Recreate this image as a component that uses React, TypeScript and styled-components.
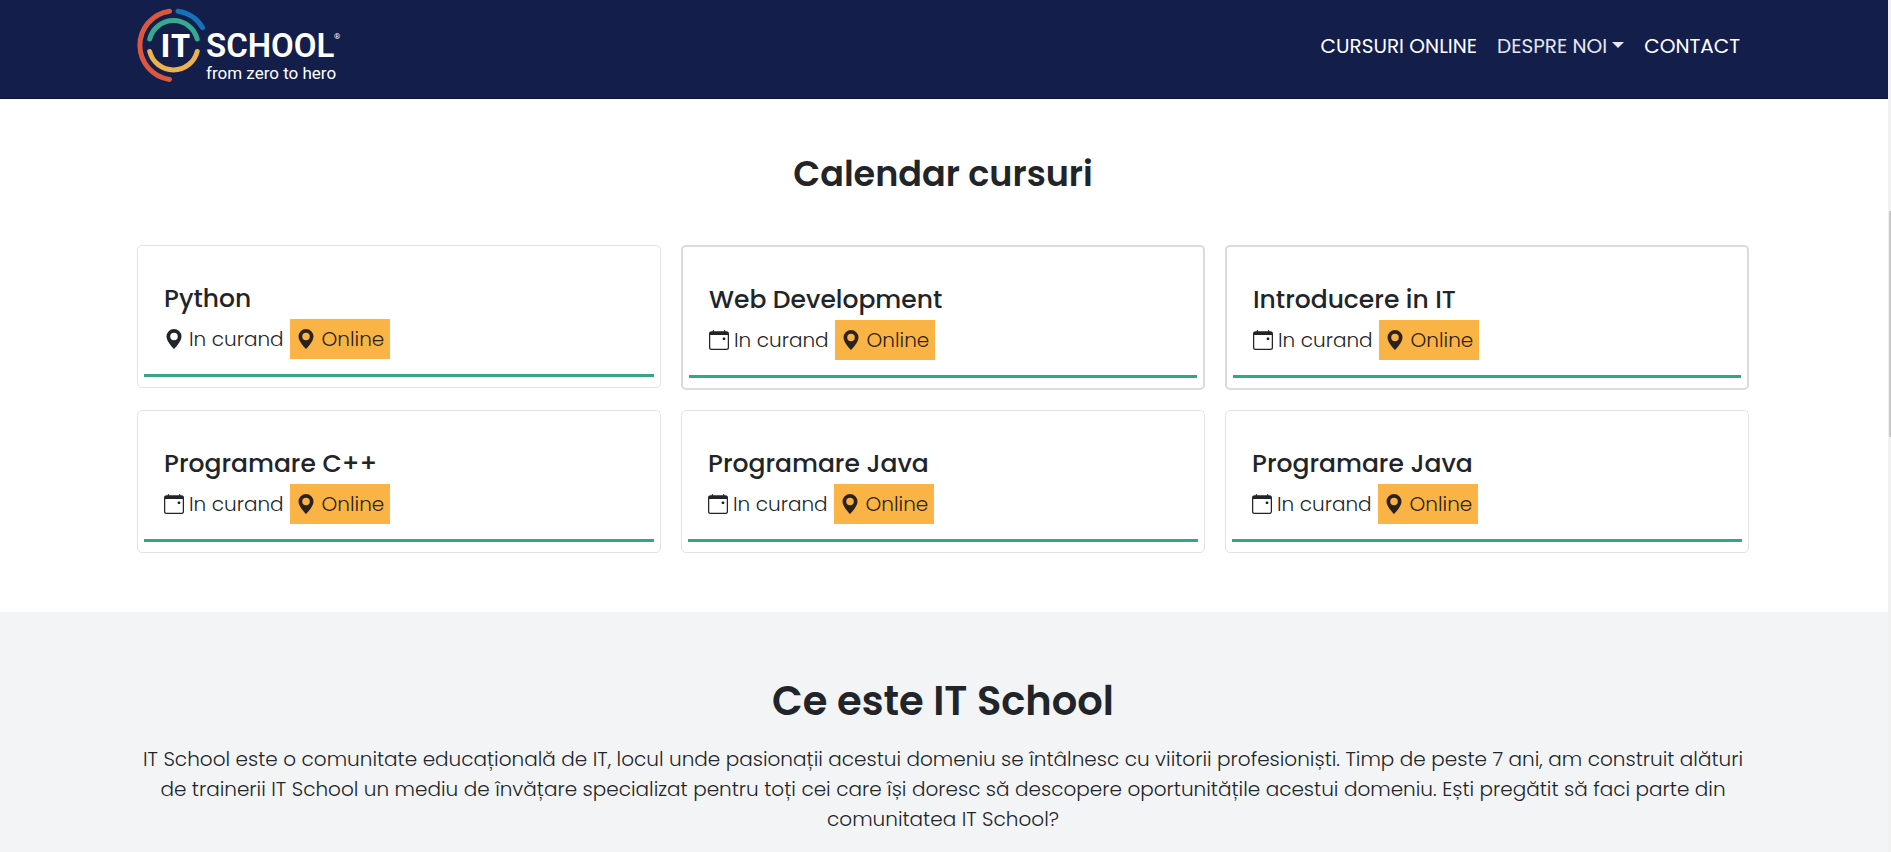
import React from "react";
import styled, { createGlobalStyle } from "styled-components";

const GlobalStyle = createGlobalStyle`
  *, *::before, *::after { box-sizing: border-box; }
  html { scrollbar-width: none; }
  body {
    margin: 0;
    background: #fff;
    color: #212529;
    font-family: Poppins, Inter, "Liberation Sans", sans-serif;
    font-size: 20px;
    font-weight: 300;
    line-height: 30px;
  }
  h1, h2, h3, p, ul { margin: 0; padding: 0; }
`;

const Shell = styled.div`
  display: flex;
  min-height: 100vh;
`;

const Page = styled.div`
  flex: 1;
  min-width: 0;
  display: flex;
  flex-direction: column;
`;

const ScrollTrack = styled.div`
  width: 3px;
  padding: 211px 0 0 1px;
  background: #f1f1f1;
`;

const ScrollThumb = styled.div`
  height: 226px;
  background: #c8c8c8;
`;

const Container = styled.div`
  padding: 0 139px 0 137px;
  @media (max-width: 1100px) { padding: 0 24px; }
`;

const Header = styled.header`
  background: #141e4b;
  border-bottom: 1px solid #0a1036;
`;

const Bar = styled(Container)`
  display: flex;
  flex-wrap: wrap;
  align-items: center;
  justify-content: space-between;
`;

const Brand = styled.a`
  display: block;
  line-height: 0;
`;

const Nav = styled.nav`
  display: flex;
  flex-wrap: wrap;
  align-items: center;
  gap: 20px;
  padding: 0 9px 6px 0;
`;

const navItem = `
  color: #fff;
  font-weight: 400;
  font-size: 20px;
  line-height: 30px;
  text-decoration: none;
`;

const NavLink = styled.a`${navItem}`;

const NavMenuButton = styled.button`
  ${navItem}
  display: flex;
  align-items: center;
  gap: 5px;
  padding: 0;
  border: 0;
  background: none;
  color: #e4e8f2;
  font-family: inherit;
  cursor: pointer;
  &::after {
    content: "";
    margin-bottom: 3px;
    border: 6px solid transparent;
    border-top-color: currentColor;
    border-bottom: 0;
  }
`;

const Calendar = styled.section`
  padding: 50px 0 59px;
`;

const SectionTitle = styled.h2<{ $large?: boolean }>`
  font-size: ${p => (p.$large ? 40 : 35)}px;
  font-weight: 600;
  line-height: 50px;
  text-align: center;
`;

const CardGrid = styled.ul`
  display: grid;
  grid-template-columns: repeat(3, minmax(0, 1fr));
  align-items: start;
  gap: 20px;
  margin-top: 46px;
  list-style: none;
  @media (max-width: 1100px) { grid-template-columns: 1fr; }
`;

const Card = styled.li<{ $strong?: boolean }>`
  padding: 6px 6px 10px;
  border: ${p => (p.$strong ? "2px solid #d9dbdc" : "1px solid #dfe3e4")};
  border-radius: 5px;
`;

const CardBody = styled.div`
  padding: 29px 20px 15px;
  border-bottom: 3px solid #36a582;
`;

const CardTitle = styled.h3`
  margin-bottom: 2px;
  font-size: 25px;
  font-weight: 500;
  line-height: 36px;
`;

const Meta = styled.div`
  display: flex;
  align-items: center;
  gap: 6px;
`;

const Status = styled.span`
  display: flex;
  align-items: center;
  gap: 5px;
`;

const Badge = styled.span`
  display: flex;
  align-items: center;
  gap: 6px;
  padding: 5px 6px;
  background: #fab446;
  color: #2b221c;
`;

const About = styled.section`
  flex: 1;
  padding: 64px 0 16px;
  background: #f3f4f5;
  text-align: center;
`;

const Lead = styled.p`
  margin-top: 18px;
`;

const PinIcon = () => (
  <svg width="20" height="20" viewBox="0 0 16 16" fill="currentColor" aria-hidden="true">
    <path d="M8 16s6-5.686 6-10A6 6 0 0 0 2 6c0 4.314 6 10 6 10m0-7a3 3 0 1 1 0-6 3 3 0 0 1 0 6" />
  </svg>
);

const CalendarIcon = () => (
  <svg width="20" height="20" viewBox="0 0 16 16" fill="currentColor" aria-hidden="true">
    <path d="M11 6.5a.5.5 0 0 1 .5-.5h1a.5.5 0 0 1 .5.5v1a.5.5 0 0 1-.5.5h-1a.5.5 0 0 1-.5-.5z" />
    <path d="M3.500 0a.5.5 0 0 1 .5.5V1h8V.5a.5.5 0 0 1 1 0V1h1a2 2 0 0 1 2 2v11a2 2 0 0 1-2 2H2a2 2 0 0 1-2-2V3a2 2 0 0 1 2-2h1V.5a.5.5 0 0 1 .5-.5M1 4v10a1 1 0 0 0 1 1h12a1 1 0 0 0 1-1V4z" />
  </svg>
);

const Logo = () => (
  <svg width="206" height="98" viewBox="2 0 206 98" role="img" aria-label="IT School - from zero to hero">
    <g fill="none" strokeWidth="5" strokeLinecap="round">
      <path stroke="#dc5740" d="M34.500 11.200A34.500 34.500 0 0 0 34.500 79.500" />
      <path stroke="#1572b8" d="M43 11.200A34.500 34.500 0 0 1 67.500 27.500" />
      <path stroke="#36aa8c" d="M14.700 39A24.500 24.500 0 0 1 62.200 39" />
      <path stroke="#efb14d" d="M14.700 51.500A24.500 24.500 0 0 0 62.200 51.500" />
    </g>
    <g fill="#fff">
      <text x="25" y="57" fontFamily="Open Sans, sans-serif" fontWeight="700" fontSize="33">IT</text>
      <text x="71" y="57" fontFamily="Roboto, sans-serif" fontWeight="600" fontSize="33">SCHOOL</text>
      <text x="71" y="79" fontFamily="Roboto, sans-serif" fontWeight="400" fontSize="17">from zero to hero</text>
      <text x="199" y="39" fontFamily="Roboto, sans-serif" fontWeight="400" fontSize="8">®</text>
    </g>
  </svg>
);

type Course = { title: string; pin?: boolean; strong?: boolean };

const courses: Course[] = [
  { title: "Python", pin: true },
  { title: "Web Development", strong: true },
  { title: "Introducere in IT", strong: true },
  { title: "Programare C++" },
  { title: "Programare Java" },
  { title: "Programare Java" },
];

const CourseCard = ({ title, pin, strong }: Course) => (
  <Card $strong={strong}>
    <CardBody>
      <CardTitle>{title}</CardTitle>
      <Meta>
        <Status>
          {pin ? <PinIcon /> : <CalendarIcon />}
          In curand
        </Status>
        <Badge>
          <PinIcon />
          Online
        </Badge>
      </Meta>
    </CardBody>
  </Card>
);

export default function App() {
  return (
    <>
      <GlobalStyle />
      <Shell>
        <Page>
          <Header>
            <Bar>
              <Brand href="#"><Logo /></Brand>
              <Nav>
                <NavLink href="#cursuri">CURSURI ONLINE</NavLink>
                <NavMenuButton type="button" aria-haspopup="true">DESPRE NOI</NavMenuButton>
                <NavLink href="#contact">CONTACT</NavLink>
              </Nav>
            </Bar>
          </Header>
          <main>
            <Calendar id="cursuri">
              <Container>
                <SectionTitle>Calendar cursuri</SectionTitle>
                <CardGrid>
                  {courses.map((c, i) => <CourseCard key={i} {...c} />)}
                </CardGrid>
              </Container>
            </Calendar>
          </main>
          <About>
            <Container>
              <SectionTitle $large>Ce este IT School</SectionTitle>
              <Lead>
                IT School este o comunitate educațională de IT, locul unde pasionații acestui domeniu se întâlnesc cu viitorii profesioniști. Timp de peste 7 ani, am construit alături de trainerii IT School un mediu de învățare specializat pentru toți cei care își doresc să descopere oportunitățile acestui domeniu. Ești pregătit să faci parte din comunitatea IT School?
              </Lead>
            </Container>
          </About>
        </Page>
        <ScrollTrack><ScrollThumb /></ScrollTrack>
      </Shell>
    </>
  );
}
